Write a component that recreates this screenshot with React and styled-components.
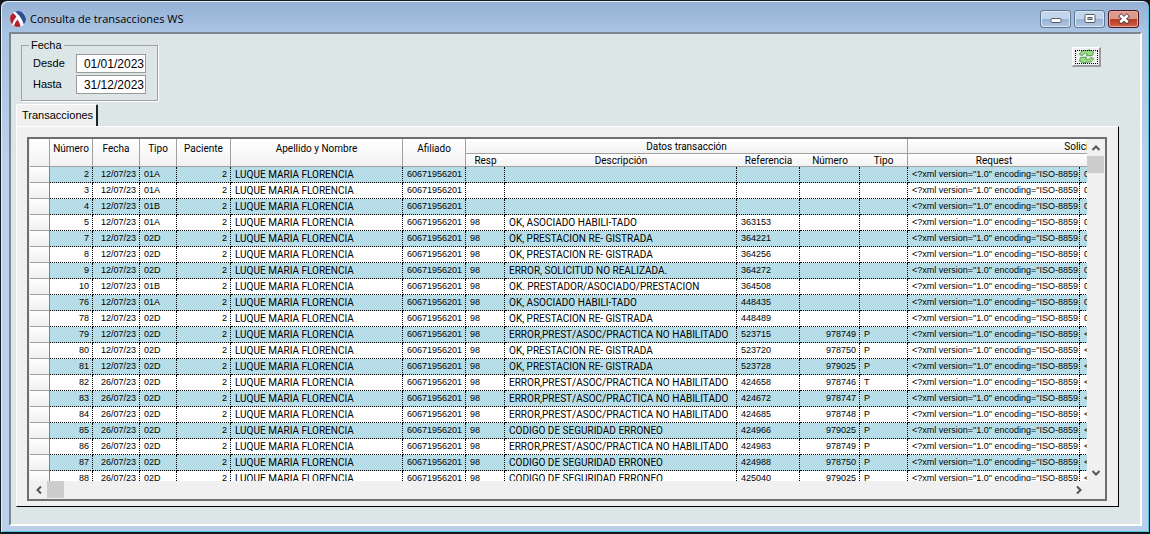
import React, { useState } from 'react';
import styled, { createGlobalStyle, css } from 'styled-components';

const XML = '<?xml version="1.0" encoding="ISO-8859';
const RE_GISTRADA = 'OK, PRESTACION RE- GISTRADA';
const NO_HABILITADO = 'ERROR,PREST/ASOC/PRACTICA NO HABILITADO';
const ERRONEO = 'CODIGO DE SEGURIDAD ERRONEO';

const COLUMN_WIDTHS = [20, 43, 47, 37, 54, 172, 63, 39, 232, 63, 60, 48, 172, 180];

// numero, fecha, tipo, resp, descripcion, referencia, numero trx, tipo trx
const TRANSACTIONS = [
  [2, '12/07/23', '01A', '', '', '', '', ''],
  [3, '12/07/23', '01A', '', '', '', '', ''],
  [4, '12/07/23', '01B', '', '', '', '', ''],
  [5, '12/07/23', '01A', '98', 'OK, ASOCIADO HABILI-TADO', '363153', '', ''],
  [7, '12/07/23', '02D', '98', RE_GISTRADA, '364221', '', ''],
  [8, '12/07/23', '02D', '98', RE_GISTRADA, '364256', '', ''],
  [9, '12/07/23', '02D', '98', 'ERROR, SOLICITUD NO REALIZADA.', '364272', '', ''],
  [10, '12/07/23', '01B', '98', 'OK. PRESTADOR/ASOCIADO/PRESTACION', '364508', '', ''],
  [76, '12/07/23', '01A', '98', 'OK, ASOCIADO HABILI-TADO', '448435', '', ''],
  [78, '12/07/23', '02D', '98', RE_GISTRADA, '448489', '', ''],
  [79, '12/07/23', '02D', '98', NO_HABILITADO, '523715', '978749', 'P'],
  [80, '12/07/23', '02D', '98', RE_GISTRADA, '523720', '978750', 'P'],
  [81, '12/07/23', '02D', '98', RE_GISTRADA, '523728', '979025', 'P'],
  [82, '26/07/23', '02D', '98', NO_HABILITADO, '424658', '978746', 'T'],
  [83, '26/07/23', '02D', '98', NO_HABILITADO, '424672', '978747', 'P'],
  [84, '26/07/23', '02D', '98', NO_HABILITADO, '424685', '978748', 'P'],
  [85, '26/07/23', '02D', '98', ERRONEO, '424966', '979025', 'P'],
  [86, '26/07/23', '02D', '98', NO_HABILITADO, '424983', '978749', 'P'],
  [87, '26/07/23', '02D', '98', ERRONEO, '424988', '978750', 'P'],
  [88, '26/07/23', '02D', '98', ERRONEO, '425040', '979025', 'P'],
];

const CHEVRONS = {
  up: 'M1.5 7 L5 3.5 L8.5 7',
  down: 'M1.5 3 L5 6.5 L8.5 3',
  left: 'M7 1.5 L3.5 5 L7 8.5',
  right: 'M3 1.5 L6.5 5 L3 8.5',
};

const Chevron = ({ direction }) => (
  <svg width="10" height="10" viewBox="0 0 10 10" aria-hidden="true">
    <path d={CHEVRONS[direction]} fill="none" stroke="#555" strokeWidth="2" />
  </svg>
);

const Logo = () => (
  <svg width="18" height="18" viewBox="0 0 18 18" aria-hidden="true">
    <circle cx="9" cy="9" r="8" fill="#fff" />
    <path d="M5.6 1.8 A8 8 0 0 1 14.8 14.4 C13 9 9.6 3.6 5.6 1.8 Z" fill="#2d4f92" />
    <path d="M3.6 3.1 C5.4 4 6.6 5.4 7.4 6.8 C5.4 9 4 11.4 3.2 14.4 A8 8 0 0 1 3.6 3.1 Z" fill="#b5202e" />
    <path d="M8.6 9.4 C10 11.6 11 13.8 11.6 16.5 A8 8 0 0 1 5 15.9 C5.6 13.4 6.8 11.2 8.6 9.4 Z" fill="#b5202e" />
  </svg>
);

const RefreshIcon = () => (
  <svg width="17" height="15" viewBox="0 0 17 15" aria-hidden="true">
    <path
      d="M1.5 5.5 C2 2.6 5 1 10 1.8 L10.5 .6 L15.5 3 L14.5 6.6 L8.5 6.8 L9.5 5 C7 4.2 5.4 4.6 4.4 6.6 Z"
      fill="#9bdc84"
      stroke="#44914a"
      strokeWidth=".8"
      strokeLinejoin="round"
    />
    <path
      d="M15.5 9.5 C15 12.4 12 14 7 13.2 L6.5 14.4 L1.5 12 L2.5 8.4 L8.5 8.2 L7.5 10 C10 10.8 11.6 10.4 12.6 8.4 Z"
      fill="#9bdc84"
      stroke="#44914a"
      strokeWidth=".8"
      strokeLinejoin="round"
    />
  </svg>
);

const MinimizeIcon = () => (
  <svg width="12" height="12" viewBox="0 0 12 12" aria-hidden="true">
    <rect x="1" y="5.5" width="10" height="4" rx="1" fill="#fff" stroke="#535d6b" />
  </svg>
);

const MaximizeIcon = () => (
  <svg width="12" height="12" viewBox="0 0 12 12" aria-hidden="true">
    <rect x="1" y="1.5" width="10" height="8" rx="1" fill="#fff" stroke="#535d6b" />
    <rect x="4" y="4.5" width="4" height="2" fill="#9cb2cc" stroke="#535d6b" />
  </svg>
);

const CloseIcon = () => (
  <svg width="14" height="12" viewBox="0 0 14 12" aria-hidden="true">
    <path d="M2.6 1.8 L11.4 9.8 M11.4 1.8 L2.6 9.8" stroke="#5a3038" strokeWidth="4.4" />
    <path d="M3.2 2.3 L10.8 9.3 M10.8 2.3 L3.2 9.3" stroke="#fff" strokeWidth="2.8" />
  </svg>
);

const TransactionRow = ({ data }) => {
  const [numero, fecha, tipo, resp, descripcion, referencia, trxNumero, trxTipo] = data;

  return (
    <Row>
      <RowMarker />
      <Cell $right>{numero}</Cell>
      <Cell $right>{fecha}</Cell>
      <Cell>{tipo}</Cell>
      <Cell $right>2</Cell>
      <TextCell>LUQUE MARIA FLORENCIA</TextCell>
      <Cell>60671956201</Cell>
      <Cell>{resp}</Cell>
      <TextCell>{descripcion}</TextCell>
      <Cell>{referencia}</Cell>
      <Cell $right>{trxNumero}</Cell>
      <Cell>{trxTipo}</Cell>
      <Cell>{XML}</Cell>
      <Cell>{trxTipo ? XML : '0'}</Cell>
    </Row>
  );
};

const TransactionTable = () => (
  <Table>
    <colgroup>
      {COLUMN_WIDTHS.map((width, i) => (
        <Col key={i} $width={width} />
      ))}
    </colgroup>
    <thead>
      <tr>
        <HeadCell rowSpan={2} />
        <HeadCell rowSpan={2}>Número</HeadCell>
        <HeadCell rowSpan={2}>Fecha</HeadCell>
        <HeadCell rowSpan={2}>Tipo</HeadCell>
        <HeadCell rowSpan={2}>Paciente</HeadCell>
        <HeadCell rowSpan={2}>Apellido y Nombre</HeadCell>
        <HeadCell rowSpan={2}>Afiliado</HeadCell>
        <GroupCell colSpan={5}>Datos transacción</GroupCell>
        <GroupCell colSpan={2}>Solicitud</GroupCell>
      </tr>
      <tr>
        <SubCell>Resp</SubCell>
        <SubCell>Descripción</SubCell>
        <SubCell>Referencia</SubCell>
        <SubCell>Número</SubCell>
        <SubCell $last>Tipo</SubCell>
        <SubCell>Request</SubCell>
        <SubCell $last />
      </tr>
    </thead>
    <tbody>
      {TRANSACTIONS.map((data) => (
        <TransactionRow key={data[0]} data={data} />
      ))}
    </tbody>
  </Table>
);

const App = () => {
  const [desde, setDesde] = useState('01/01/2023');
  const [hasta, setHasta] = useState('31/12/2023');

  return (
    <>
      <GlobalStyle />
      <Window>
        <TitleBar>
          <Logo />
          <Title>Consulta de transacciones WS</Title>
          <WindowButton aria-label="Minimizar">
            <MinimizeIcon />
          </WindowButton>
          <WindowButton aria-label="Maximizar">
            <MaximizeIcon />
          </WindowButton>
          <WindowButton aria-label="Cerrar" $danger>
            <CloseIcon />
          </WindowButton>
        </TitleBar>
        <Client>
          <Toolbar>
            <DateGroup>
              <Legend>Fecha</Legend>
              <Label htmlFor="desde">Desde</Label>
              <DateInput id="desde" value={desde} onChange={(e) => setDesde(e.target.value)} />
              <Label htmlFor="hasta">Hasta</Label>
              <DateInput id="hasta" value={hasta} onChange={(e) => setHasta(e.target.value)} />
            </DateGroup>
            <RefreshButton aria-label="Actualizar">
              <RefreshIcon />
            </RefreshButton>
          </Toolbar>
          <Tab>Transacciones</Tab>
          <Panel>
            <GridFrame>
              <GridView>
                <TransactionTable />
              </GridView>
              <VerticalBar>
                <ArrowButton aria-label="Subir">
                  <Chevron direction="up" />
                </ArrowButton>
                <Thumb />
                <Track />
                <ArrowButton aria-label="Bajar">
                  <Chevron direction="down" />
                </ArrowButton>
              </VerticalBar>
              <HorizontalBar>
                <ArrowButton aria-label="Izquierda">
                  <Chevron direction="left" />
                </ArrowButton>
                <Thumb />
                <Track />
                <ArrowButton aria-label="Derecha">
                  <Chevron direction="right" />
                </ArrowButton>
              </HorizontalBar>
            </GridFrame>
          </Panel>
        </Client>
      </Window>
    </>
  );
};

export default App;

const GlobalStyle = createGlobalStyle`
  * {
    box-sizing: border-box;
  }

  body {
    margin: 0;
    background-color: #10181c;
    color: #000;
    font-family: 'Liberation Sans', Arial, sans-serif;
    font-size: 11px;
  }

  button,
  input {
    font-family: inherit;
    padding: 0;
  }
`;

const Window = styled.div`
  display: flex;
  flex-direction: column;
  height: 100vh;
  padding: 0 7px 6px 8px;
  border: 1px solid #14191f;
  border-bottom-width: 2px;
  border-radius: 7px 7px 0 0;
  background: linear-gradient(#93b1d5, #a9c3e2 30px, #b9d1ea 160px);
  box-shadow: inset 1px 1px 0 #e4eef8, inset -1px -1px 0 #4fc4dc;
`;

const TitleBar = styled.header`
  display: flex;
  align-items: center;
  flex: none;
  gap: 3px;
  height: 31px;
  padding: 5px 3px 0 0;
`;

const Title = styled.h1`
  flex: 1;
  margin: 0;
  font-family: 'Open Sans', 'Noto Sans', sans-serif;
  font-size: 11px;
  font-weight: 400;
  line-height: 16px;
`;

const WindowButton = styled.button`
  display: flex;
  align-items: center;
  justify-content: center;
  width: 31px;
  height: 18px;
  border: 1px solid #5d7692;
  border-radius: 3px;
  background: linear-gradient(#c3d5ea 50%, #98b4d4 50%, #b0c8e2);
  box-shadow: inset 0 0 0 1px #dbe7f4;

  ${({ $danger }) =>
    $danger &&
    css`
      border-color: #4b1820;
      background: linear-gradient(#dc9a8e 50%, #b93a22 50%, #cc6248);
      box-shadow: inset 0 0 0 1px #e6aca0;
    `}
`;

const Client = styled.main`
  display: flex;
  flex: 1;
  flex-direction: column;
  min-height: 0;
  padding: 5px 21px 17px 5px;
  border: 2px solid #fff;
  border-top-color: #7c868c;
  border-left-color: #7c868c;
  background-color: #dce6e7;
`;

const Toolbar = styled.div`
  display: flex;
  align-items: flex-start;
  justify-content: space-between;
  padding: 0 18px 3px 5px;
`;

const DateGroup = styled.fieldset`
  display: grid;
  grid-template-columns: 43px 70px;
  row-gap: 2px;
  align-items: center;
  margin: 0;
  padding: 2px 11px 6px;
  border: 1px solid #a0a0a0;
  box-shadow: 1px 1px 0 #fff;
`;

const Legend = styled.legend`
  margin-left: -4px;
  padding: 0 2px;
  line-height: 13px;
`;

const Label = styled.label`
  padding-bottom: 2px;
  line-height: 16px;
`;

const DateInput = styled.input`
  width: 100%;
  height: 19px;
  padding-right: 1px;
  border: 1px solid #9a9a9a;
  border-radius: 0;
  background-color: #fff;
  color: #000;
  font-size: 12px;
  text-align: right;
  outline: 0;
`;

const RefreshButton = styled.button`
  display: flex;
  align-items: center;
  justify-content: center;
  width: 29px;
  height: 20px;
  margin-top: 8px;
  border: 1px solid #fff;
  border-right: 2px solid #9b9b9b;
  border-bottom: 2px solid #9b9b9b;
  background-color: #f0f0f0;
  outline: 1px dotted #000;
  outline-offset: -4px;
`;

const Tab = styled.button`
  flex: none;
  align-self: flex-start;
  height: 22px;
  padding: 0 3px 2px 5px;
  border: 0;
  border-top: 1px solid #fff;
  border-left: 1px solid #fff;
  border-right: 2px solid #222;
  border-radius: 2px 2px 0 0;
  background-color: #f0f0f0;
  color: #000;
  font-size: 11px;
`;

const Panel = styled.section`
  display: flex;
  flex: 1;
  min-height: 0;
  padding: 10px 11px 5px 10px;
  border: 1px solid #000;
  border-top-color: #fff;
  border-left-color: #fff;
  background-color: #f0f0f0;
`;

const GridFrame = styled.div`
  display: grid;
  flex: 1;
  grid-template-columns: minmax(0, 1fr) 17px;
  grid-template-rows: minmax(0, 1fr) 17px;
  min-width: 0;
  padding: 0 1px 1px;
  border: 2px solid #6e6e6e;
  background-color: #f0f0f0;
`;

const GridView = styled.div`
  overflow: hidden;
  background-color: #fff;
`;

const Table = styled.table`
  width: 1230px;
  border-collapse: separate;
  border-spacing: 0;
  table-layout: fixed;
  font-size: 9px;
  line-height: 11px;
  white-space: nowrap;
`;

const Col = styled.col`
  width: ${({ $width }) => $width}px;
`;

const HeadCell = styled.th`
  padding: 4px 0 0;
  border-right: 1px solid #a0a0a0;
  border-bottom: 1px solid #a0a0a0;
  background: linear-gradient(#fff, #f2f2f2);
  font-family: Roboto, 'Liberation Sans', sans-serif;
  font-size: 10px;
  font-weight: 400;
  text-align: center;
  vertical-align: top;
`;

const GroupCell = styled(HeadCell)`
  height: 15px;
  padding: 2px 0 0;
`;

const SubCell = styled(HeadCell)`
  height: 13px;
  padding: 1px 0 0;
  border-right: ${({ $last }) => ($last ? '1px solid #a0a0a0' : '0')};
`;

const Row = styled.tr`
  height: 16px;
  background-color: #fff;

  &:nth-child(odd) {
    background-color: #b7dde8;
  }
`;

const RowMarker = styled.td`
  padding: 0;
  border-right: 1px solid #808080;
  border-bottom: 1px solid #a0a0a0;
  background: linear-gradient(#fff, #f0f0f0);
`;

const Cell = styled.td`
  padding: 0 3px 0 4px;
  border-right: 1px dotted #000;
  border-bottom: 1px dotted #000;
  overflow: hidden;
  text-align: ${({ $right }) => ($right ? 'right' : 'left')};
`;

const TextCell = styled(Cell)`
  font-family: Roboto, 'Liberation Sans', sans-serif;
  font-size: 10px;
`;

const VerticalBar = styled.div`
  display: flex;
  flex-direction: column;
  align-items: stretch;
`;

const HorizontalBar = styled.div`
  display: flex;
  align-items: stretch;
`;

const ArrowButton = styled.button`
  display: flex;
  align-items: center;
  justify-content: center;
  width: 17px;
  height: 17px;
  border: 0;
  background-color: transparent;
`;

const Thumb = styled.div`
  width: 17px;
  height: 17px;
  background-color: #cdcdcd;
`;

const Track = styled.div`
  flex: 1;
`;
